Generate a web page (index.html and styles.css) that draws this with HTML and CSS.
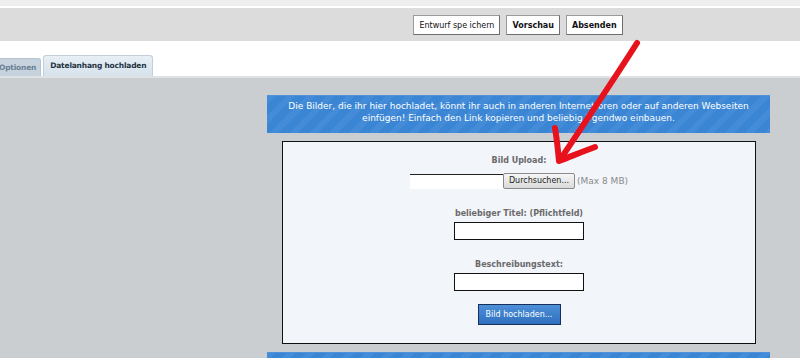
FILE: index.html
```html
<!DOCTYPE html>
<html lang="de">
<head>
    <meta charset="UTF-8">
    <title>Datelanhang hochladen</title>
    <link rel="stylesheet" href="styles.css">
</head>
<body>
    <div class="top-strip"></div>
    <div class="action-bar">
        <div class="action-spacer"></div>
        <div class="action-buttons">
            <button type="button" class="action-btn">Entwurf spe ichern</button>
            <button type="button" class="action-btn bold">Vorschau</button>
            <button type="button" class="action-btn bold">Absenden</button>
        </div>
    </div>
    <div class="tab-row">
        <div class="tab">Optionen</div>
        <div class="tab active">Datelanhang hochladen</div>
    </div>
    <div class="main">
        <div class="sidebar"></div>
        <div class="content">
            <div class="banner">
                Die Bilder, die ihr hier hochladet, könnt ihr auch in anderen Internetforen oder auf anderen Webseiten<br>
                einfügen! Einfach den Link kopieren und beliebig irgendwo einbauen.
            </div>
            <form class="upload-box">
                <div class="field-label">Bild Upload:</div>
                <div class="file-row">
                    <span class="file-text"></span>
                    <span class="file-btn">Durchsuchen...</span>
                    <span class="file-hint">(Max 8 MB)</span>
                </div>
                <div class="field-label title-label">beliebiger Titel: (Pflichtfeld)</div>
                <input type="text" class="text-input">
                <div class="field-label desc-label">Beschreibungstext:</div>
                <input type="text" class="text-input">
                <button type="button" class="upload-btn">Bild hochladen...</button>
            </form>
            <div class="banner bottom"></div>
        </div>
    </div>

    <!-- hand drawn arrow on top of the screenshot -->
    <svg class="arrow" width="800" height="358" viewBox="0 0 800 358">
        <path d="M637 43 C620 70 600 100 560 160" fill="none" stroke="#e8121c" stroke-width="6" stroke-linecap="round"/>
        <path d="M555 128 C557 140 558 150 559 161 C572 156 584 151 595 147" fill="none" stroke="#e8121c" stroke-width="6" stroke-linecap="round" stroke-linejoin="round"/>
    </svg>
</body>
</html>
```

FILE: styles.css
```css
* {
    margin: 0;
    padding: 0;
    box-sizing: border-box;
}

body {
    font-family: 'DejaVu Sans', Verdana, sans-serif;
    font-size: 8px;
    background-color: #ffffff;
    width: 800px;
    height: 358px;
    overflow: hidden;
    position: relative;
}

.top-strip {
    height: 8px;
    background-color: #eeeeee;
    border-bottom: 2px solid #ffffff;
}

.action-bar {
    display: flex;
    height: 33px;
    background-color: #dcdcdc;
}

.action-spacer {
    width: 236px;
}

.action-buttons {
    flex: 1;
    display: flex;
    justify-content: center;
    align-items: flex-start;
    gap: 6px;
    padding-top: 7px;
}

.action-btn {
    font-family: inherit;
    font-size: 8px;
    color: #111;
    background-color: #ffffff;
    border: 1px solid #9a9a9a;
    border-right-color: #6e6e6e;
    border-bottom-color: #6e6e6e;
    height: 20px;
    padding: 0 5px;
}

.action-btn.bold {
    font-weight: bold;
}

.tab-row {
    display: flex;
    align-items: flex-end;
    height: 35px;
    margin-left: -14px;
    gap: 2px;
}

.tab {
    font-size: 7.5px;
    font-weight: bold;
    letter-spacing: -0.2px;
    color: #6b7f93;
    background-color: #c6d3df;
    border: 1px solid #b6c4d1;
    border-bottom: none;
    border-radius: 3px 3px 0 0;
    height: 18px;
    line-height: 17px;
    padding: 0 4px 0 12px;
}

.tab.active {
    color: #243342;
    background: linear-gradient(#e8eff5, #d6e2ec);
    border-color: #c2cfdb;
    height: 21px;
    line-height: 20px;
    padding: 0 6px;
}

.main {
    display: flex;
    height: 282px;
    background-color: #cbced1;
    border-top: 2px solid #dfe2e4;
}

.sidebar {
    width: 236px;
}

.content {
    flex: 1;
    padding: 17px 30px 0 31px;
}

.banner {
    height: 38px;
    padding-top: 4px;
    font-size: 9px;
    color: #ffffff;
    text-align: center;
    line-height: 12px;
    background-color: #3a86d5;
    background-image: repeating-linear-gradient(135deg, rgba(255, 255, 255, 0.05) 0 6px, rgba(255, 255, 255, 0) 6px 14px);
    border-top: 1px solid #4f92d8;
}

.banner.bottom {
    margin-top: 8px;
    height: 20px;
}

.upload-box {
    display: flex;
    flex-direction: column;
    align-items: center;
    margin: 8px 14px 0 15px;
    height: 203px;
    background-color: #f2f5fa;
    border: 1px solid #111111;
    padding-top: 14px;
}

.field-label {
    font-weight: bold;
    color: #6a6a6a;
    line-height: 10px;
}

.file-row {
    display: flex;
    align-items: center;
    margin-top: 7px;
    height: 16px;
}

.file-text {
    width: 93px;
    height: 15px;
    background-color: #ffffff;
    border-top: 1px solid #222;
}

.file-btn {
    height: 16px;
    line-height: 14px;
    padding: 0 5px;
    color: #222;
    background: linear-gradient(#f6f6f6, #dadada);
    border: 1px solid #8a8a8a;
    border-radius: 2px;
}

.file-hint {
    font-size: 9px;
    color: #8a8a8a;
    margin-left: 2px;
}

.title-label {
    margin-top: 20px;
}

.desc-label {
    margin-top: 20px;
}

.text-input {
    width: 130px;
    height: 18px;
    margin-top: 3px;
    border: 1px solid #111;
    background-color: #ffffff;
}

.upload-btn {
    font-family: inherit;
    font-size: 8px;
    margin-top: 13px;
    width: 83px;
    height: 21px;
    color: #ffffff;
    background: linear-gradient(#4d8fd8, #2f6fbf);
    border: 1px solid #17305a;
}

.arrow {
    position: absolute;
    left: 0;
    top: 0;
    pointer-events: none;
}
```
